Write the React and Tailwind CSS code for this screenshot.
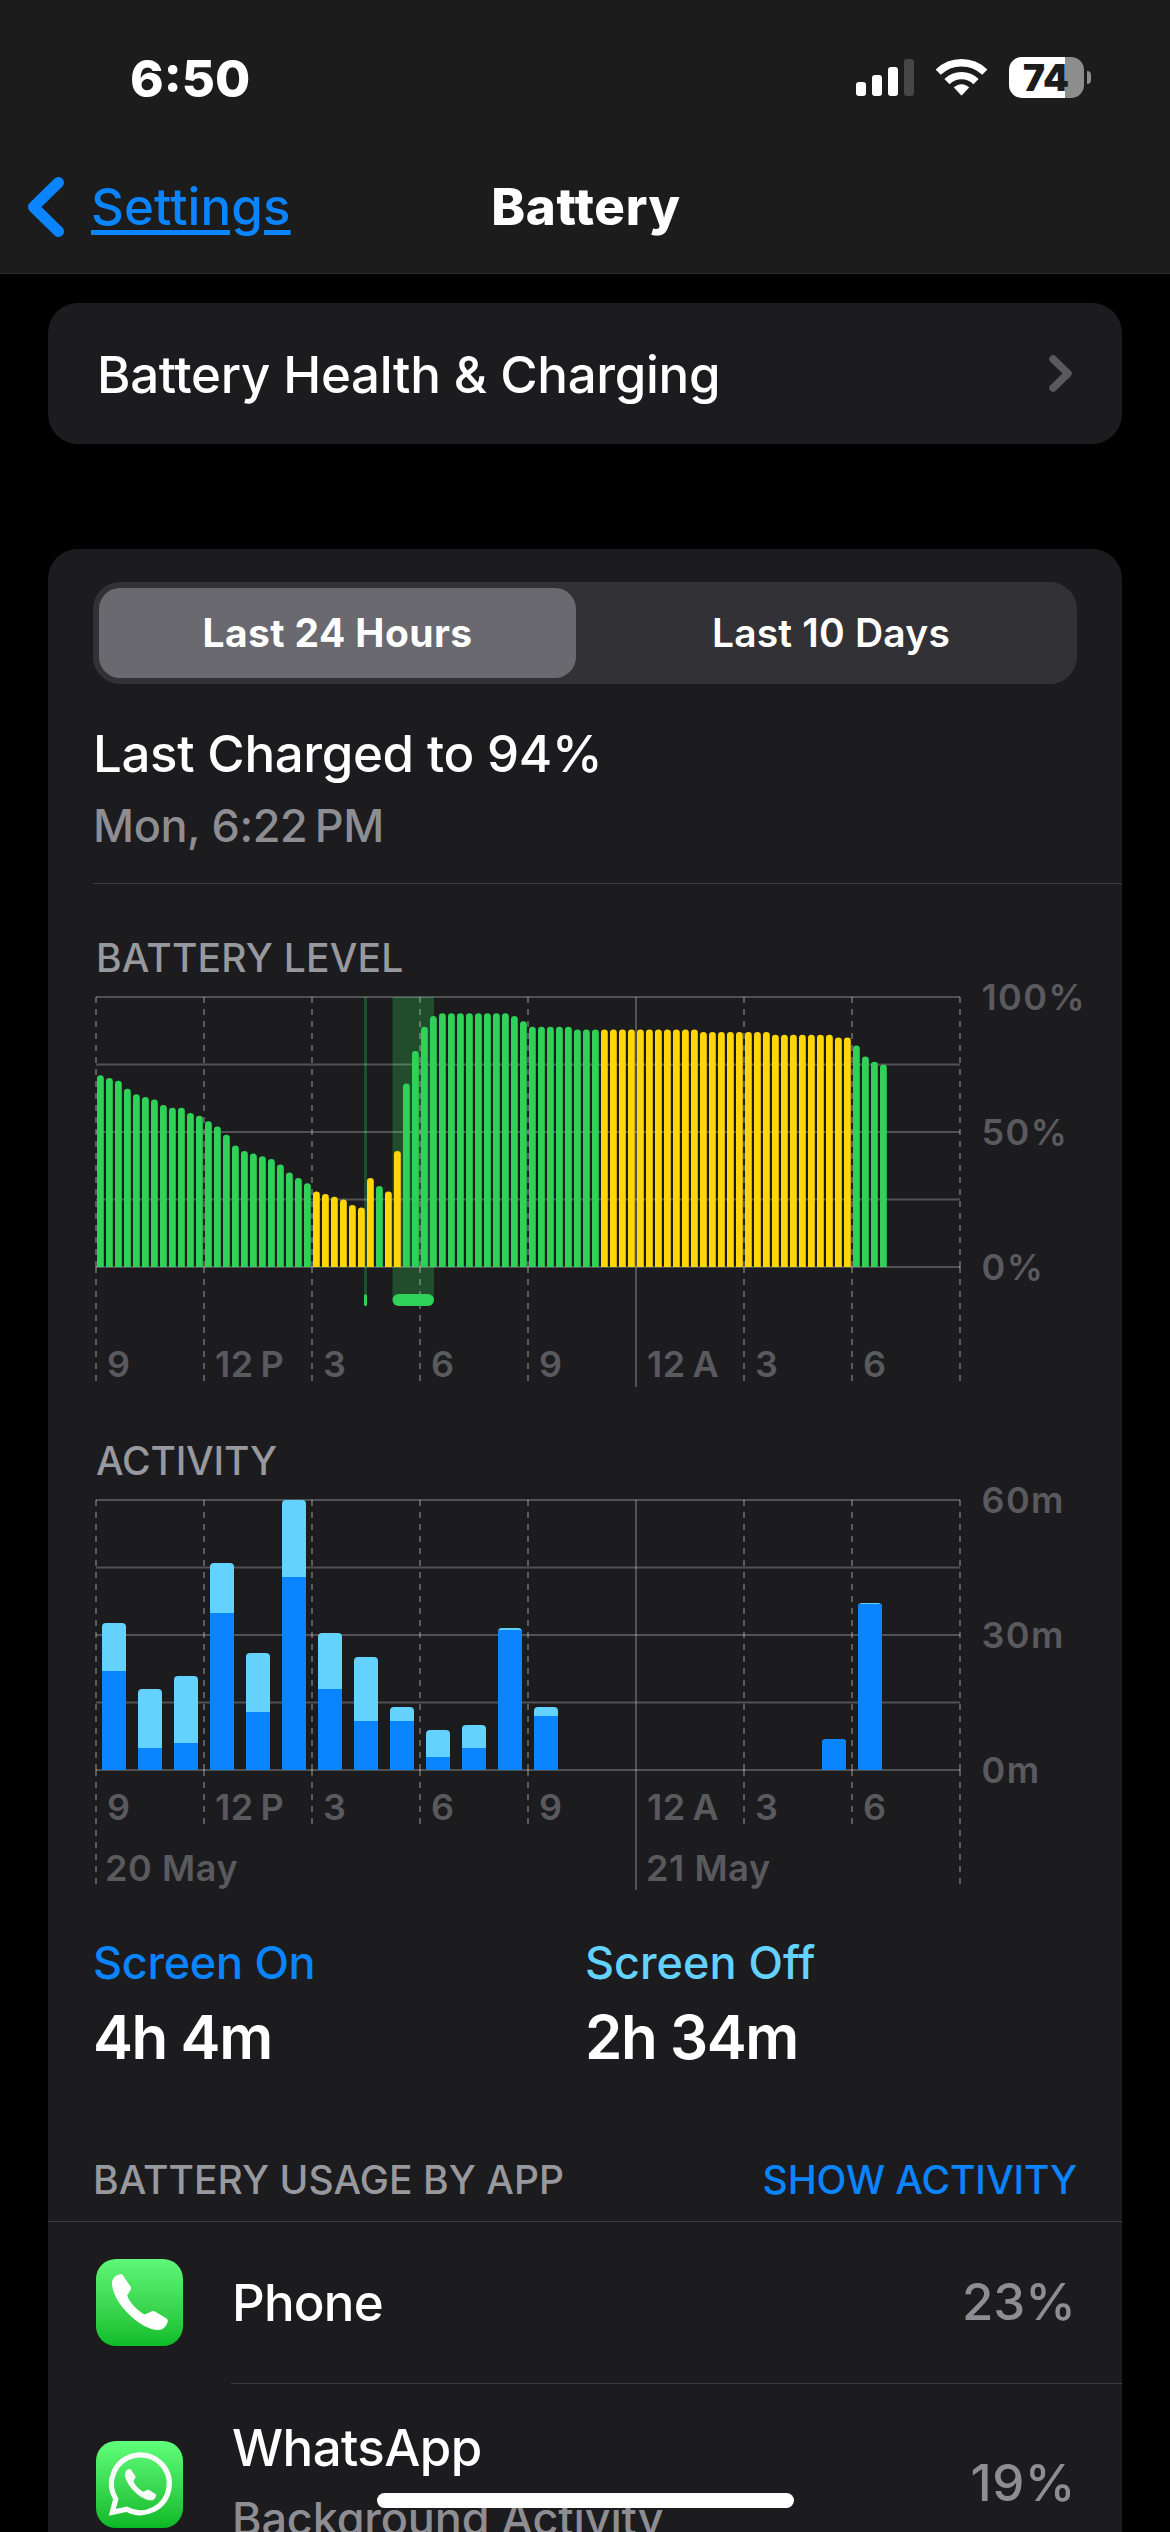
import { useState } from "react";

const GREEN = "#30d158";
const YELLOW = "#ffd60a";

// One reading every 15 minutes, starting at 9 AM
const levels = [
  71, 70, 69, 66, 64, 63, 62, 60, 59, 59, 57, 56,
  54, 52, 49, 45, 43, 42, 41, 40, 38, 35, 33, 31,
  28, 27, 26, 25, 23, 22, 33, 30, 28, 43, 68, 80,
  89, 93, 94, 94, 94, 94, 94, 94, 94, 94, 93, 91,
  89, 89, 89, 89, 89, 88, 88, 88, 88, 88, 88, 88,
  88, 88, 88, 88, 88, 88, 88, 87, 87, 87, 87, 87,
  87, 87, 87, 86, 86, 86, 86, 86, 86, 86, 85, 85,
  82, 78, 76, 75,
];

const isLowPower = (i) =>
  (i >= 24 && i <= 33 && i !== 31) || (i >= 56 && i <= 83);

// Bar heights in pixels: total and screen-on part
const activity = [
  { hour: 0, total: 147, on: 99 },
  { hour: 1, total: 81, on: 22 },
  { hour: 2, total: 94, on: 27 },
  { hour: 3, total: 207, on: 157 },
  { hour: 4, total: 117, on: 58 },
  { hour: 5, total: 270, on: 193 },
  { hour: 6, total: 137, on: 81 },
  { hour: 7, total: 113, on: 49 },
  { hour: 8, total: 63, on: 49 },
  { hour: 9, total: 40, on: 13 },
  { hour: 10, total: 45, on: 22 },
  { hour: 11, total: 142, on: 140 },
  { hour: 12, total: 63, on: 54 },
  { hour: 20, total: 31, on: 31 },
  { hour: 21, total: 167, on: 166 },
];

const hours = ["9", "12\u2009P", "3", "6", "9", "12\u2009A", "3", "6"];

const HANDSET =
  "M16 24C16 19 20 16 24 15.2C25.3 14.9 26.2 15.3 27 16.5L34.5 27.5C35.3 28.8 35.2 30 34.4 31.2L31.2 36.6C33 43 42 52.5 48.6 55.6L55.5 52.4C56.8 51.8 57.8 51.8 59 52.6L70.5 59.5C71.8 60.3 72.1 61.5 71.6 63C70.3 67.5 67 71 62 71C45 71 16 44 16 24Z";

function Grid({ yLabels, labelY, dashEnd, edgeEnd, solidEnd }) {
  return (
    <>
      <g stroke="#fff" strokeOpacity="0.24" strokeWidth="2">
        {[0, 67.5, 135, 202.5, 270].map((y) => (
          <line key={y} x1="0" x2="864" y1={y} y2={y} />
        ))}
        {[0, 1, 2, 3, 4, 5, 6, 7, 8].map((i) => {
          const x = i * 108;
          if (i === 5) {
            return <line key={i} x1={x} x2={x} y1="0" y2={solidEnd} />;
          }
          return (
            <g key={i} strokeDasharray="6 6" strokeOpacity="0.28">
              <line x1={x} x2={x} y1="0" y2="270" />
              <line
                x1={x}
                x2={x}
                y1="270"
                y2={i === 0 || i === 8 ? edgeEnd : dashEnd}
              />
            </g>
          );
        })}
      </g>
      <g fill="#5a5a5e" fontSize="36" fontWeight="600">
        {hours.map((h, i) => (
          <text key={i} x={i * 108 + 11} y={labelY} letterSpacing="0.6">
            {h}
          </text>
        ))}
        {yLabels.map((label, i) => (
          <text key={label} x="885.5" y={13 + i * 135} letterSpacing="1.4">
            {label}
          </text>
        ))}
      </g>
    </>
  );
}

function BatteryChart() {
  return (
    <svg className="mt-[15px] ml-[3px] block h-[393px] w-[981px] overflow-visible">
      <g fill={GREEN} fillOpacity="0.27">
        <rect x="268" y="0" width="3" height="297" />
        <rect x="296.5" y="0" width="41.5" height="303" />
      </g>
      <Grid
        yLabels={["100%", "50%", "0%"]}
        labelY={380}
        dashEnd={384}
        edgeEnd={384}
        solidEnd={390}
      />
      {levels.map((level, i) => {
        const x = i * 9 + 1;
        const top = 270 - level * 2.7;
        return (
          <path
            key={i}
            d={`M${x} 270V${top + 3.3}a3.4 3.3 0 0 1 6.8 0V270z`}
            fill={isLowPower(i) ? YELLOW : GREEN}
          />
        );
      })}
      <rect x="268" y="297" width="3" height="12" rx="1.5" fill={GREEN} />
      <rect x="296.5" y="297" width="41.5" height="12" rx="6" fill={GREEN} />
    </svg>
  );
}

function ActivityChart() {
  return (
    <svg className="mt-[15px] ml-[3px] block h-[390px] w-[981px] overflow-visible">
      <Grid
        yLabels={["60m", "30m", "0m"]}
        labelY={320}
        dashEnd={324}
        edgeEnd={384}
        solidEnd={390}
      />
      {activity.map(({ hour, total, on }) => {
        const x = hour * 36 + 6;
        return (
          <g key={hour}>
            <clipPath id={`bar-${hour}`}>
              <rect x={x} y={270 - total} width="24" height={total + 5} rx="4" />
            </clipPath>
            <g clipPath={`url(#bar-${hour})`}>
              <rect x={x} y={270 - total} width="24" height={total} fill="#64d2ff" />
              <rect x={x} y={270 - on} width="24" height={on} fill="#0a84ff" />
            </g>
          </g>
        );
      })}
      <g fill="#5a5a5e" fontSize="36" fontWeight="600" letterSpacing="0.6">
        <text x="9" y="381">20 May</text>
        <text x="550" y="381">21 May</text>
      </g>
    </svg>
  );
}

function StatusBar() {
  return (
    <div className="flex h-[155px] items-center justify-between pr-[79px] pl-[130px]">
      <span className="pt-px text-[51px] leading-none font-extrabold">6:50</span>
      <div className="flex items-center gap-[22px]">
        <svg className="h-[37px] w-[58px]" viewBox="0 0 58 37" fill="#fff">
          <rect x="0" y="23" width="10" height="14" rx="3" />
          <rect x="16" y="16" width="10" height="21" rx="3" />
          <rect x="32" y="8" width="10" height="29" rx="3" />
          <rect x="48" y="0" width="10" height="37" rx="3" fill="#474747" />
        </svg>
        <svg className="h-[37px] w-[51px]" viewBox="0 0 51 37" fill="none" stroke="#fff">
          <path d="M2.2 13.2A33.4 33.4 0 0 1 48.8 13.2" strokeWidth="7.4" />
          <path d="M11 22.6A20.6 20.6 0 0 1 40 22.6" strokeWidth="7.4" />
          <path
            d="M18.2 28.4Q25.5 22.8 32.8 28.4L25.5 36.2z"
            fill="#fff"
            strokeWidth="0.8"
            strokeLinejoin="round"
          />
        </svg>
        <div className="flex items-center gap-[3px]">
          <div className="flex h-[41px] w-[75px] items-center justify-center rounded-[13px] bg-linear-to-r from-white from-75% to-[#8d8d8d] to-75%">
            <span className="pr-px text-[37px] leading-none font-black text-[#1c1c1c]">
              74
            </span>
          </div>
          <div className="h-[13px] w-1 rounded-r-full bg-[#8d8d8d]" />
        </div>
      </div>
    </div>
  );
}

function PhoneIcon() {
  return (
    <div className="size-[87px] rounded-[20px] bg-linear-to-b from-[#5ff777] to-[#0bbd29]">
      <svg viewBox="0 0 87 87" fill="#fff">
        <path d={HANDSET} />
      </svg>
    </div>
  );
}

function WhatsAppIcon() {
  return (
    <div className="size-[87px] rounded-[20px] bg-linear-to-b from-[#5fff7b] to-[#08b825]">
      <svg viewBox="0 0 87 87" fill="none">
        <path
          d="M19.8 58A28.9 28.9 0 1 1 30.8 68.3L16.3 71.3Z"
          stroke="#fafafa"
          strokeWidth="5.2"
        />
        <path d={HANDSET} fill="#fafafa" transform="translate(20 19.6) scale(0.56)" />
      </svg>
    </div>
  );
}

function App() {
  const [range, setRange] = useState("24h");

  const tabClass = (active) =>
    active
      ? "my-1.5 mr-[9px] ml-1.5 rounded-[21px] bg-[#6a696f] text-[39px] font-bold tracking-[0.4px]"
      : "my-1.5 rounded-[21px] text-[39px] font-semibold tracking-[0.2px]";

  return (
    <div className="relative h-[2532px] w-[1170px] overflow-hidden bg-black font-['Inter',sans-serif] text-white">
      {/* Header */}
      <header className="h-[274px] border-b border-[#2a2a2a] bg-[#1c1c1c]">
        <StatusBar />
        <nav className="grid h-[103px] grid-cols-3 items-center">
          <a className="flex items-center gap-[27px] pt-px pl-[28px] text-[51px] font-medium tracking-[0.1px] text-[#0a84ff]">
            <svg className="h-[60px] w-9" viewBox="0 0 36 60" fill="none">
              <path
                d="M30.5 5.5L5.5 30L30.5 54.5"
                stroke="currentColor"
                strokeWidth="11"
                strokeLinecap="round"
                strokeLinejoin="round"
              />
            </svg>
            <span className="underline decoration-[5px] underline-offset-[5px]">
              Settings
            </span>
          </a>
          <h1 className="pt-0.5 pl-0.5 text-center text-[51px] font-extrabold tracking-[0.7px]">
            Battery
          </h1>
        </nav>
      </header>

      {/* Battery health */}
      <section className="mx-12 mt-[29px] flex h-[141px] items-center justify-between rounded-[30px] bg-[#1c1c1e] pr-[49px] pl-[49px]">
        <span className="pt-1 text-[51px] font-medium tracking-[-0.3px]">
          Battery Health &amp; Charging
        </span>
        <svg className="h-[37px] w-6" viewBox="0 0 24 37" fill="none">
          <path
            d="M4 4L19 18.5L4 33"
            stroke="#5a5a5e"
            strokeWidth="7.5"
            strokeLinecap="round"
            strokeLinejoin="round"
          />
        </svg>
      </section>

      <section className="mx-12 mt-[105px] h-[2100px] rounded-t-[30px] bg-[#1c1c1e] pt-[33px]">
        <div className="px-[45px]">
          <div className="grid h-[102px] grid-cols-2 rounded-[27px] bg-[#323136]">
            <button className={tabClass(range === "24h")} onClick={() => setRange("24h")}>
              Last 24 Hours
            </button>
            <button className={tabClass(range === "10d")} onClick={() => setRange("10d")}>
              Last 10 Days
            </button>
          </div>
          <p className="mt-[34px] text-[51px] leading-[72px] font-medium tracking-[-0.37px]">
            Last Charged to 94%
          </p>
          <p className="mt-[6px] text-[45px] leading-[60px] font-medium tracking-[-0.4px] text-[#8d8d93]">
            Mon, 6:22{"\u2009"}PM
          </p>
        </div>
        <div className="mt-[27px] ml-[45px] h-px bg-[#3d3d41]" />

        {/* Charts */}
        <div className="px-[45px]">
          <h2 className="mt-[50px] ml-[3px] text-[39px] leading-[48px] font-medium tracking-[0.2px] text-[#98989f]">
            BATTERY LEVEL
          </h2>
          <BatteryChart />
          <h2 className="mt-[47px] ml-[3px] text-[39px] leading-[48px] font-medium tracking-[-0.2px] text-[#98989f]">
            ACTIVITY
          </h2>
          <ActivityChart />

          <div className="mt-[43px] grid grid-cols-2">
            <div>
              <p className="text-[45px] leading-[60px] font-medium tracking-[-0.3px] text-[#0a84ff]">
                Screen On
              </p>
              <p className="mt-2 text-[60px] leading-[72px] font-semibold tracking-[-1.4px]">
                4h 4m
              </p>
            </div>
            <div>
              <p className="text-[45px] leading-[60px] font-medium text-[#64d2ff]">
                Screen Off
              </p>
              <p className="mt-2 text-[60px] leading-[72px] font-semibold tracking-[-1.4px]">
                2h 34m
              </p>
            </div>
          </div>

          <div className="mt-[83px] flex justify-between text-[39px] leading-[48px] font-medium">
            <h2 className="tracking-[0.05px] text-[#98989f]">BATTERY USAGE BY APP</h2>
            <button className="tracking-[-0.1px] text-[#0a84ff]">SHOW ACTIVITY</button>
          </div>
        </div>
        <div className="mt-[17px] h-px bg-[#3d3d41]" />

        {/* App list */}
        <div className="flex h-[161px] items-center pr-[46px] pl-12">
          <PhoneIcon />
          <span className="ml-[49px] flex-1 pt-0.5 text-[51px] font-medium tracking-[-0.8px]">
            Phone
          </span>
          <span className="text-[51px] font-medium text-[#8d8d93]">23%</span>
        </div>
        <div className="ml-[183px] h-px bg-[#3d3d41]" />
        <div className="flex h-[201px] items-center pr-[46px] pl-12">
          <WhatsAppIcon />
          <div className="mt-[-5px] ml-[49px] flex-1 font-medium">
            <p className="text-[51px] leading-[64px] tracking-[-0.6px]">WhatsApp</p>
            <p className="mt-[9px] text-[45px] leading-[60px] tracking-[-0.15px] text-[#8d8d93]">
              Background Activity
            </p>
          </div>
          <span className="mt-[-3px] text-[51px] font-medium tracking-[0.5px] text-[#8d8d93]">
            19%
          </span>
        </div>
      </section>

      {/* Home indicator */}
      <div className="absolute top-[2493px] left-[377px] h-[15px] w-[417px] rounded-full bg-white" />
    </div>
  );
}

export default App;
